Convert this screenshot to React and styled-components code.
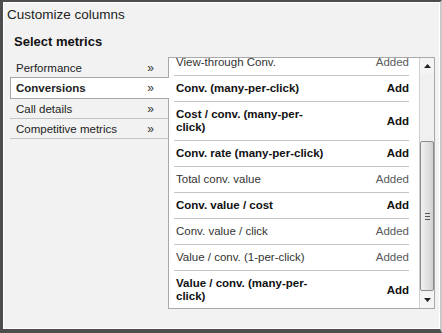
import React from "react";
import styled, { createGlobalStyle } from "styled-components";

const GlobalStyle = createGlobalStyle`
  html, body {
    margin: 0;
    padding: 0;
    background: #f2f2f2;
  }
  body {
    font-family: "Liberation Sans", Arial, sans-serif;
  }
`;

const Frame = styled.div`
  box-sizing: border-box;
  width: 442px;
  height: 333px;
  border-top: 2px solid #4d4d4d;
  border-left: 3px solid #4d4d4d;
  border-bottom: 4px solid #4d4d4d;
  border-right: 2px solid #c8c8c8;
  background: #f2f2f2;
  box-shadow: inset 1px 1px 0 #ffffff, inset -1px -1px 0 #ffffff;
  display: flex;
  flex-direction: column;
  overflow: hidden;
`;

const Title = styled.div`
  box-sizing: border-box;
  font-size: 13.5px;
  color: #222;
  padding: 4px 0 0 4px;
  height: 24px;
  line-height: 17px;
`;

const Section = styled.div`
  box-sizing: border-box;
  font-size: 13px;
  font-weight: bold;
  color: #111;
  padding: 8px 0 0 11px;
  line-height: 16px;
  height: 31px;
`;

const Body = styled.div`
  display: flex;
  padding-left: 7px;
`;

const Nav = styled.div`
  width: 158px;
  padding-top: 1px;
  display: flex;
  flex-direction: column;
  position: relative;
  z-index: 1;
`;

const NavItem = styled.div`
  display: flex;
  align-items: center;
  justify-content: space-between;
  box-sizing: border-box;
  height: ${p => (p.$active ? 22 : 20)}px;
  margin-top: ${p => (p.$active ? -1 : 0)}px;
  margin-right: ${p => (p.$active ? -1 : 0)}px;
  font-size: 11.5px;
  color: #222;
  font-weight: ${p => (p.$active ? "bold" : "normal")};
  background: ${p => (p.$active ? "#ffffff" : "transparent")};
  border-top: ${p => (p.$active ? "1px solid #a8a8a8" : "none")};
  border-bottom: 1px solid ${p => (p.$active ? "#a8a8a8" : "#c4c4c4")};
  border-left: ${p => (p.$active ? "1px solid #a8a8a8" : "none")};
  padding-left: ${p => (p.$active ? 5 : 6)}px;
  padding-right: ${p => (p.$active ? 15 : 14)}px;
`;

const Chevron = styled.span`
  font-size: 12px;
  font-weight: normal;
  color: #333;
`;

const Panel = styled.div`
  width: 267px;
  height: 252px;
  box-sizing: border-box;
  border: 1px solid #a8a8a8;
  background: #ffffff;
  display: flex;
  overflow: hidden;
`;

const Viewport = styled.div`
  flex: 1;
  overflow: hidden;
  padding: 0 10px 0 5px;
`;

const List = styled.div`
  margin-top: -8px;
`;

const Row = styled.div`
  display: flex;
  align-items: center;
  justify-content: space-between;
  padding: 6px 0 6px 2px;
  border-bottom: 1px solid #c4c4c4;
  font-size: 11.5px;
  line-height: 13px;
  &:last-child {
    border-bottom: none;
  }
`;

const Label = styled.span`
  width: 154px;
  color: ${p => (p.$bold ? "#111" : "#333")};
  font-weight: ${p => (p.$bold ? "bold" : "normal")};
`;

const Status = styled.span`
  color: ${p => (p.$add ? "#111" : "#5a5a5a")};
  font-weight: ${p => (p.$add ? "bold" : "normal")};
`;

const Scrollbar = styled.div`
  width: 15px;
  box-sizing: border-box;
  border-left: 1px solid #d0d0d0;
  background: #f0f0f0;
  display: flex;
  flex-direction: column;
`;

const ArrowBtn = styled.div`
  height: 16px;
  display: flex;
  align-items: center;
  justify-content: center;
  background: #f4f4f4;
`;

const Track = styled.div`
  flex: 1;
  display: flex;
  flex-direction: column;
  padding-top: 67px;
`;

const Thumb = styled.div`
  height: 150px;
  box-sizing: border-box;
  border: 1px solid #8c8c8c;
  border-radius: 2px;
  background: linear-gradient(to right, #f2f2f2, #dcdcdc 70%, #cfcfcf);
  display: flex;
  align-items: center;
  justify-content: center;
`;

const Grip = styled.div`
  width: 5px;
  height: 5px;
  border-top: 1px solid #555;
  border-bottom: 1px solid #555;
  position: relative;
  &::after {
    content: "";
    position: absolute;
    left: 0;
    right: 0;
    top: 2px;
    border-top: 1px solid #555;
  }
`;

const Arrow = ({ up }) => (
  <svg width="7" height="4" viewBox="0 0 7 4">
    <path d={up ? "M0 4 L3.5 0 L7 4 Z" : "M0 0 L3.5 4 L7 0 Z"} fill="#222" />
  </svg>
);

const nav = [
  { name: "Performance" },
  { name: "Conversions", active: true },
  { name: "Call details" },
  { name: "Competitive metrics" }
];

const metrics = [
  { name: "View-through Conv.", added: true },
  { name: "Conv. (many-per-click)" },
  { name: "Cost / conv. (many-per-click)" },
  { name: "Conv. rate (many-per-click)" },
  { name: "Total conv. value", added: true },
  { name: "Conv. value / cost" },
  { name: "Conv. value / click", added: true },
  { name: "Value / conv. (1-per-click)", added: true },
  { name: "Value / conv. (many-per-click)" }
];

export default function App() {
  return (
    <>
      <GlobalStyle />
      <Frame>
        <Title>Customize columns</Title>
        <Section>Select metrics</Section>
        <Body>
          <Nav>
            {nav.map(n => (
              <NavItem key={n.name} $active={n.active}>
                <span>{n.name}</span>
                <Chevron>»</Chevron>
              </NavItem>
            ))}
          </Nav>
          <Panel>
            <Viewport>
              <List>
                {metrics.map(m => (
                  <Row key={m.name}>
                    <Label $bold={!m.added}>{m.name}</Label>
                    <Status $add={!m.added}>{m.added ? "Added" : "Add"}</Status>
                  </Row>
                ))}
              </List>
            </Viewport>
            <Scrollbar>
              <ArrowBtn>
                <Arrow up />
              </ArrowBtn>
              <Track>
                <Thumb>
                  <Grip />
                </Thumb>
              </Track>
              <ArrowBtn>
                <Arrow />
              </ArrowBtn>
            </Scrollbar>
          </Panel>
        </Body>
      </Frame>
    </>
  );
}
